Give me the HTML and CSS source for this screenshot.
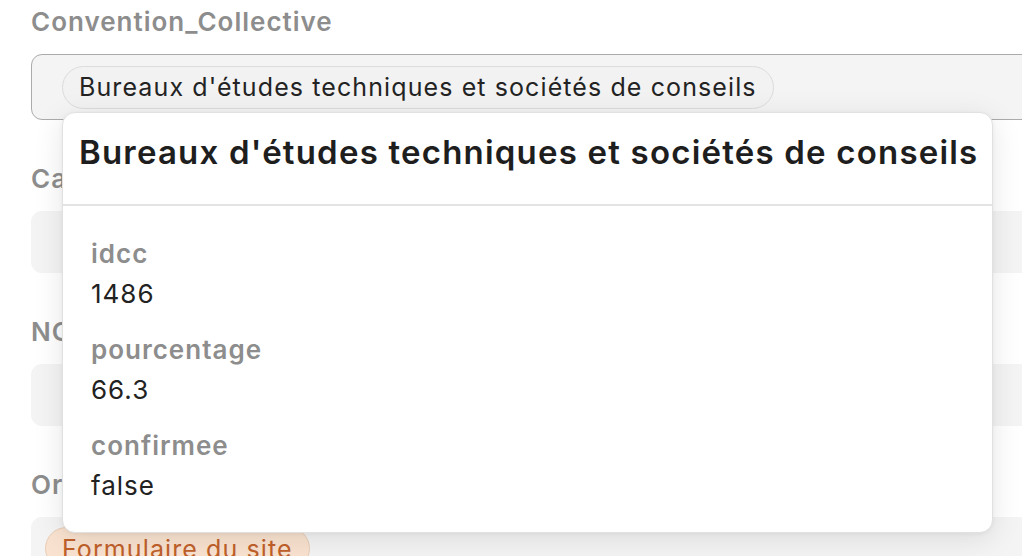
FILE: index.html
```html
<!DOCTYPE html>
<html lang="fr">
<head>
<meta charset="utf-8">
<title>Convention_Collective</title>
<link rel="stylesheet" href="styles.css">
</head>
<body>
<div class="page">
  <form class="form">
    <div class="group">
      <div class="label">Convention_Collective</div>
      <div class="field field-focus">
        <span class="chip">Bureaux d'études techniques et sociétés de conseils</span>
      </div>
    </div>
    <div class="group">
      <div class="label">Catégorie</div>
      <div class="field"></div>
    </div>
    <div class="group">
      <div class="label">NC</div>
      <div class="field"></div>
    </div>
    <div class="group">
      <div class="label">Origine</div>
      <div class="field field-top">
        <span class="chip chip-orange">Formulaire du site</span>
      </div>
    </div>
  </form>

  <div class="popover">
    <div class="popover-head">Bureaux d'études techniques et sociétés de conseils</div>
    <div class="popover-body">
      <div class="prop">
        <div class="prop-key">idcc</div>
        <div class="prop-val">1486</div>
      </div>
      <div class="prop">
        <div class="prop-key">pourcentage</div>
        <div class="prop-val">66.3</div>
      </div>
      <div class="prop">
        <div class="prop-key">confirmee</div>
        <div class="prop-val">false</div>
      </div>
    </div>
  </div>
</div>
</body>
</html>
```

FILE: styles.css
```css
html, body {
  margin: 0;
  padding: 0;
  background: #ffffff;
  overflow: hidden;
}
body {
  font-family: Inter, "Noto Sans", "Liberation Sans", sans-serif;
  width: 1022px;
  height: 556px;
}
.page {
  position: relative;
  width: 1022px;
  height: 556px;
  overflow: hidden;
}
.form {
  display: flex;
  flex-direction: column;
  gap: 41px;
  padding: 4px 0 0 31px;
  width: 1100px;
}
.group {
  display: flex;
  flex-direction: column;
  gap: 14px;
}
.label {
  font-size: 26px;
  line-height: 36px;
  font-weight: 600;
  letter-spacing: 1px;
  color: #8d8d8d;
  white-space: nowrap;
}
.field {
  box-sizing: border-box;
  height: 62px;
  border-radius: 11px;
  background: #f4f4f4;
  display: flex;
  align-items: center;
  padding-left: 14px;
}
.field-focus {
  height: 66px;
  border: 1px solid #ababab;
  padding-left: 30px;
}
.field-top {
  align-items: flex-start;
  padding-top: 10px;
}
.chip {
  box-sizing: border-box;
  height: 43px;
  display: inline-flex;
  align-items: center;
  padding: 0 16px;
  border-radius: 22px;
  background: #f2f2f2;
  border: 1px solid #dcdcdc;
  font-size: 25px;
  letter-spacing: 1.1px;
  color: #232323;
  white-space: nowrap;
}
.chip-orange {
  background: #f9e2cf;
  border-color: #e9cdb6;
  color: #c0602a;
}
.popover {
  position: absolute;
  left: 62px;
  top: 112px;
  width: 931px;
  height: 421px;
  box-sizing: border-box;
  background: #ffffff;
  border: 1px solid #e1e1e1;
  border-radius: 13px;
  box-shadow: 0 6px 30px rgba(0, 0, 0, 0.10), 0 1px 4px rgba(0, 0, 0, 0.05);
}
.popover-head {
  height: 93px;
  box-sizing: border-box;
  padding: 0 16px 14px;
  display: flex;
  align-items: center;
  border-bottom: 2px solid #e3e3e3;
  font-size: 33px;
  letter-spacing: 1.2px;
  font-weight: 600;
  color: #1e1e1e;
  white-space: nowrap;
}
.popover-body {
  padding: 28px 28px 0;
  display: flex;
  flex-direction: column;
  gap: 16px;
}
.prop {
  display: flex;
  flex-direction: column;
}
.prop-key {
  font-size: 26px;
  line-height: 40px;
  font-weight: 600;
  letter-spacing: 1px;
  color: #8d8d8d;
}
.prop-val {
  font-size: 26px;
  line-height: 40px;
  letter-spacing: 1px;
  color: #222222;
}
```
